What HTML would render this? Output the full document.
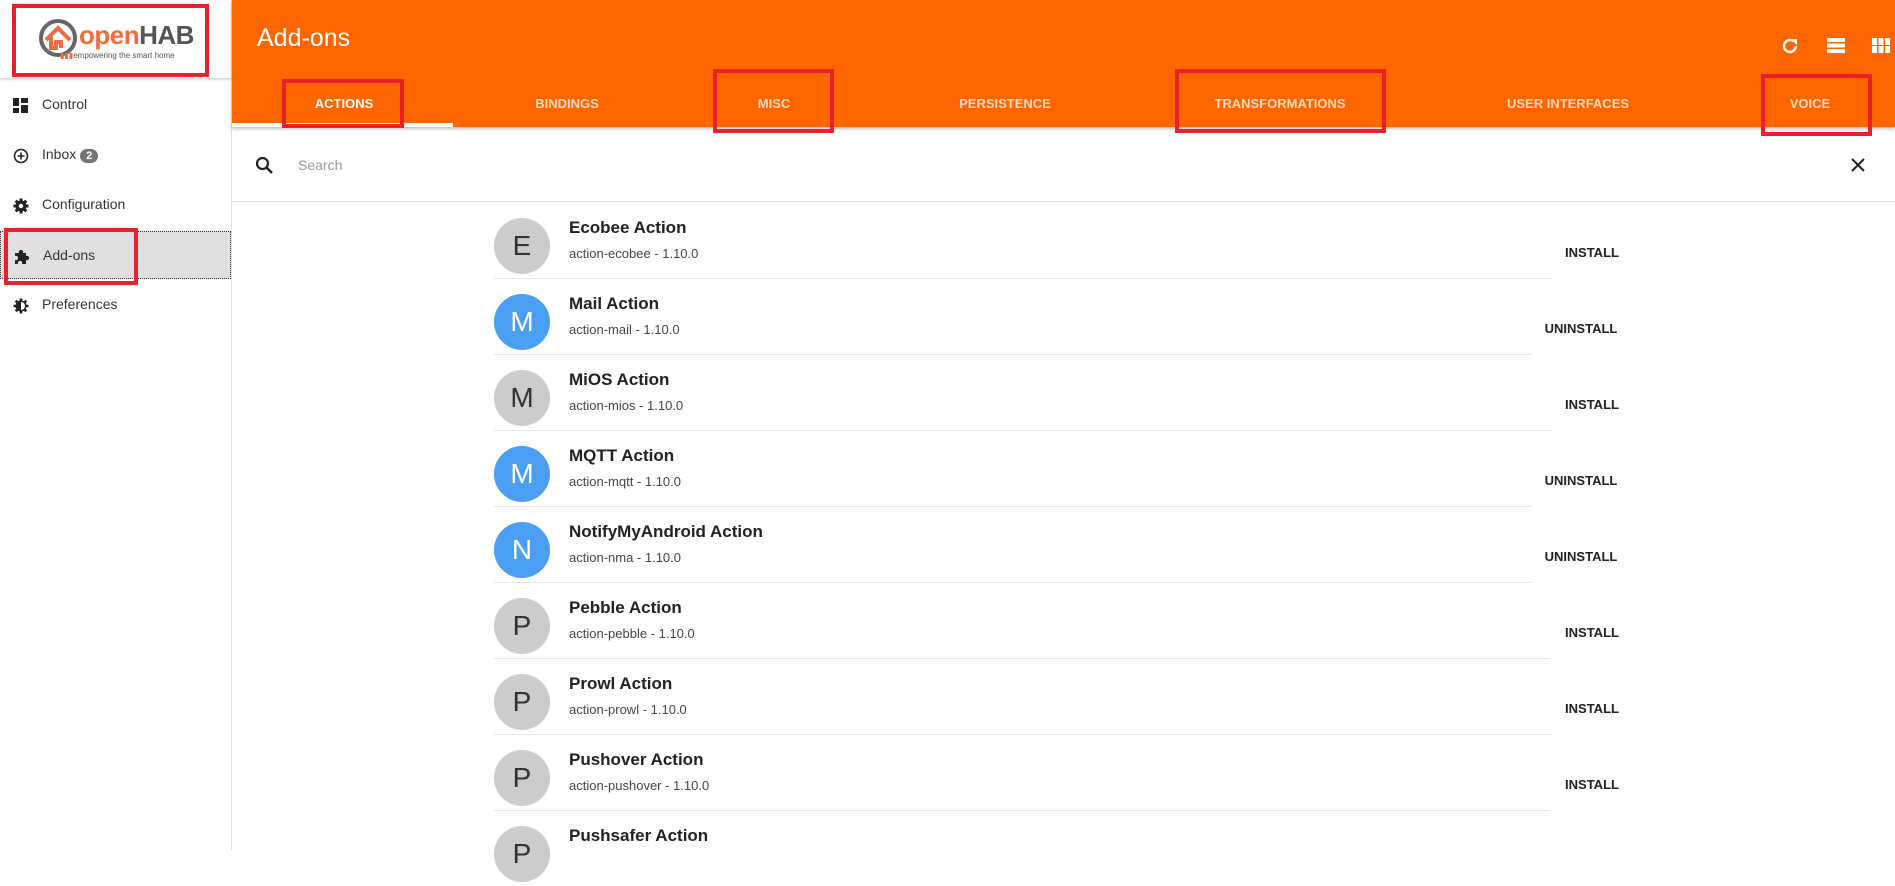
<!DOCTYPE html>
<html><head><meta charset="utf-8"><style>
*{box-sizing:border-box;margin:0;padding:0}
body{width:1895px;height:850px;overflow:hidden;background:#fff;font-family:"Liberation Sans",sans-serif;position:relative;color:#212121}
.abs{position:absolute}
.side{left:0;top:0;width:232px;height:850px;border-right:1px solid #e0e0e0;background:#fff}
.nav{position:absolute;left:0;width:231px;height:48px;font-size:14px;color:#333}
.nav span{position:absolute;left:42px;top:15px}
.nav svg{position:absolute;left:13px;top:17px}
.hdr{left:232px;top:0;width:1663px;height:127px;background:#ff6600;box-shadow:0 2px 3px rgba(0,0,0,.25)}
.tab{position:absolute;top:96px;font-size:13px;font-weight:bold;color:rgba(255,255,255,.75);transform:translateX(-50%);white-space:nowrap}
.red{position:absolute;border:4px solid #e8212b}
.row{position:absolute;left:494px;height:76px}
.av{position:absolute;left:0;top:16px;width:56px;height:56px;border-radius:50%;background:#ccc;color:#333;font-size:28px;text-align:center;line-height:56px;font-weight:normal}
.av.b{background:#4a9ff5;color:#fff}
.t{position:absolute;left:75px;top:16px;font-size:17px;font-weight:bold;white-space:nowrap}
.s{position:absolute;left:75px;top:44px;font-size:13px;color:#444;white-space:nowrap}
.btn{position:absolute;top:43px;font-size:13px;font-weight:bold;transform:translateX(-50%)}
.sep{position:absolute;top:76px;left:0;height:1px;background:#e6e6e6}
</style></head><body>
<div class="abs side">
 <div class="abs" style="left:0;top:0;width:231px;height:79px;border-bottom:1px solid #ddd;box-shadow:0 1px 2px rgba(0,0,0,.15)">
  <svg class="abs" style="left:38px;top:18px" width="40" height="40" viewBox="0 0 40 40"><circle cx="20" cy="20" r="17" fill="none" stroke="#666" stroke-width="4"/><path d="M8 22 L20 10 L32 22 M13 19 V30 H18 V24 H23 V30" fill="none" stroke="#f26a3d" stroke-width="4"/></svg>
  <div class="abs" style="left:79px;top:20px;font-size:26px;font-weight:bold;letter-spacing:-0.5px"><span style="color:#f26a3d">open</span><span style="color:#555">HAB</span></div>
  <div class="abs" style="left:60px;top:51px;font-size:8px;color:#555"><span style="color:#f26a3d">▮▮▮</span>empowering the smart home</div>
 </div>
 <div class="nav" style="top:81px"><svg width="15" height="15" viewBox="0 0 15 15"><rect x="0" y="0" width="6" height="8" fill="#222"/><rect x="8" y="0" width="7" height="5" fill="#222"/><rect x="0" y="10" width="6" height="5" fill="#222"/><rect x="8" y="7" width="7" height="8" fill="#222"/></svg><span>Control</span></div>
 <div class="nav" style="top:131px"><svg width="16" height="16" viewBox="0 0 16 16"><circle cx="8" cy="8" r="6.5" fill="none" stroke="#222" stroke-width="1.6"/><path d="M8 4.5V11.5M4.5 8H11.5" stroke="#222" stroke-width="1.6"/></svg><span>Inbox <b style="display:inline-block;background:#757575;color:#fff;border-radius:10px;font-size:11px;padding:1px 6px">2</b></span></div>
 <div class="nav" style="top:181px"><svg width="16" height="16" viewBox="0 0 16 16"><circle cx="8" cy="8" r="5.5" fill="#222"/><path d="M8 0.5V15.5M0.5 8H15.5M2.7 2.7L13.3 13.3M13.3 2.7L2.7 13.3" stroke="#222" stroke-width="3"/><circle cx="8" cy="8" r="2.2" fill="#fff"/></svg><span>Configuration</span></div>
 <div class="nav" style="top:231px;background:#e0e0e0;border:1px dotted #333"><svg width="16" height="16" viewBox="0 0 16 16"><path d="M1 4H5A2.2 2.2 0 1 1 9 4H12V7A2.2 2.2 0 1 1 12 11V15H8A2.2 2.2 0 1 0 4 15H1V11A2.2 2.2 0 1 0 1 7Z" fill="#222"/></svg><span>Add-ons</span></div>
 <div class="nav" style="top:281px"><svg width="16" height="16" viewBox="0 0 16 16"><circle cx="8" cy="8" r="5.5" fill="#222"/><path d="M8 0.5V15.5M0.5 8H15.5M2.7 2.7L13.3 13.3M13.3 2.7L2.7 13.3" stroke="#222" stroke-width="2.6"/><path d="M8 4A4 4 0 0 1 8 12Z" fill="#fff"/></svg><span>Preferences</span></div>
</div>
<div class="abs hdr">
 <div class="abs" style="left:25px;top:24px;font-size:25px;color:#fff;font-weight:300">Add-ons</div>
 <svg class="abs" style="left:1549px;top:37px" width="18" height="18" viewBox="0 0 18 18"><path d="M15 9A6 6 0 1 1 13 4.5" fill="none" stroke="#fff" stroke-width="2.4"/><path d="M10 2H16V8Z" fill="#fff"/></svg>
 <svg class="abs" style="left:1595px;top:38px" width="18" height="15" viewBox="0 0 18 15"><rect width="18" height="4" fill="#fff"/><rect y="5.5" width="18" height="4" fill="#fff"/><rect y="11" width="18" height="4" fill="#fff"/></svg>
 <svg class="abs" style="left:1640px;top:38px" width="18" height="15" viewBox="0 0 18 15"><g fill="#fff"><rect width="5" height="7"/><rect x="6.5" width="5" height="7"/><rect x="13" width="5" height="7"/><rect y="8" width="5" height="7"/><rect x="6.5" y="8" width="5" height="7"/><rect x="13" y="8" width="5" height="7"/></g></svg>
 <div class="abs" style="left:0;top:123px;width:221px;height:4px;background:#fff"></div>
</div>
<div class="tab" style="left:344px;color:#fff">ACTIONS</div>
<div class="tab" style="left:567px">BINDINGS</div>
<div class="tab" style="left:774px">MISC</div>
<div class="tab" style="left:1005px">PERSISTENCE</div>
<div class="tab" style="left:1280px">TRANSFORMATIONS</div>
<div class="tab" style="left:1568px">USER INTERFACES</div>
<div class="tab" style="left:1810px">VOICE</div>
<div class="red" style="left:12px;top:4px;width:197px;height:73px"></div>
<div class="red" style="left:4px;top:228px;width:134px;height:57px"></div>
<div class="red" style="left:282px;top:79px;width:122px;height:49px"></div>
<div class="red" style="left:713px;top:69px;width:121px;height:64px"></div>
<div class="red" style="left:1175px;top:69px;width:211px;height:64px"></div>
<div class="red" style="left:1761px;top:74px;width:111px;height:62px"></div>
<svg class="abs" style="left:255px;top:156px" width="19" height="19" viewBox="0 0 19 19"><circle cx="7.5" cy="7.5" r="5.5" fill="none" stroke="#222" stroke-width="2.2"/><path d="M11.5 11.5L17 17" stroke="#222" stroke-width="2.6"/></svg>
<div class="abs" style="left:298px;top:157px;font-size:14px;color:#999">Search</div>
<svg class="abs" style="left:1851px;top:158px" width="14" height="14" viewBox="0 0 14 14"><path d="M1 1L13 13M13 1L1 13" stroke="#222" stroke-width="2"/></svg>
<div class="abs" style="left:232px;top:201px;width:1663px;height:1px;background:#ddd"></div>

<div class="row" style="top:202px"><div class="av">E</div><div class="t">Ecobee Action</div><div class="s">action-ecobee - 1.10.0</div><div class="btn" style="left:1098px">INSTALL</div><div class="sep" style="width:1056px"></div></div>
<div class="row" style="top:278px"><div class="av b">M</div><div class="t">Mail Action</div><div class="s">action-mail - 1.10.0</div><div class="btn" style="left:1087px">UNINSTALL</div><div class="sep" style="width:1038px"></div></div>
<div class="row" style="top:354px"><div class="av">M</div><div class="t">MiOS Action</div><div class="s">action-mios - 1.10.0</div><div class="btn" style="left:1098px">INSTALL</div><div class="sep" style="width:1056px"></div></div>
<div class="row" style="top:430px"><div class="av b">M</div><div class="t">MQTT Action</div><div class="s">action-mqtt - 1.10.0</div><div class="btn" style="left:1087px">UNINSTALL</div><div class="sep" style="width:1038px"></div></div>
<div class="row" style="top:506px"><div class="av b">N</div><div class="t">NotifyMyAndroid Action</div><div class="s">action-nma - 1.10.0</div><div class="btn" style="left:1087px">UNINSTALL</div><div class="sep" style="width:1038px"></div></div>
<div class="row" style="top:582px"><div class="av">P</div><div class="t">Pebble Action</div><div class="s">action-pebble - 1.10.0</div><div class="btn" style="left:1098px">INSTALL</div><div class="sep" style="width:1056px"></div></div>
<div class="row" style="top:658px"><div class="av">P</div><div class="t">Prowl Action</div><div class="s">action-prowl - 1.10.0</div><div class="btn" style="left:1098px">INSTALL</div><div class="sep" style="width:1056px"></div></div>
<div class="row" style="top:734px"><div class="av">P</div><div class="t">Pushover Action</div><div class="s">action-pushover - 1.10.0</div><div class="btn" style="left:1098px">INSTALL</div><div class="sep" style="width:1056px"></div></div>
<div class="row" style="top:810px"><div class="av">P</div><div class="t">Pushsafer Action</div></div>
</body></html>
